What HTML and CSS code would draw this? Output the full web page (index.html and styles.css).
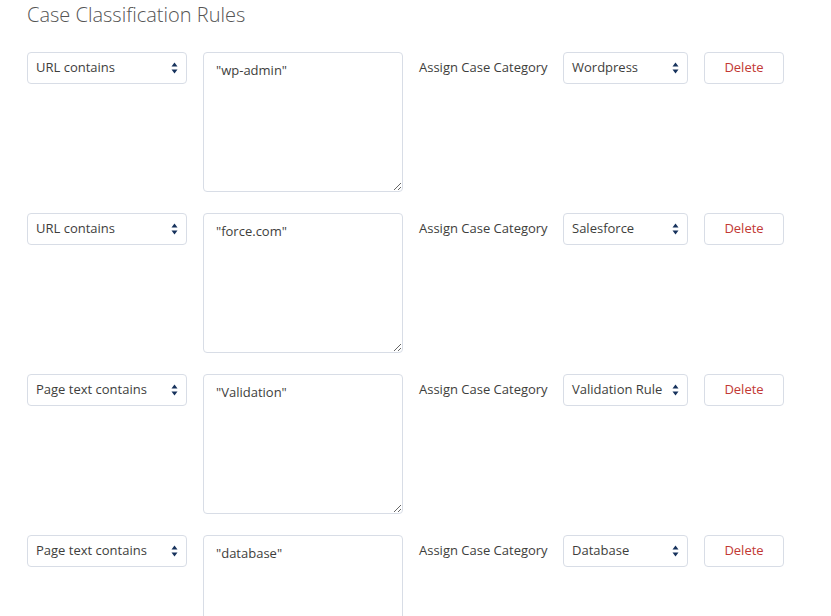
FILE: index.html
```html
<!DOCTYPE html>
<html>
<head>
<meta charset="utf-8">
<link rel="stylesheet" href="styles.css">
</head>
<body>
<div class="page">
  <h1 class="title">Case Classification Rules</h1>

  <div class="rule">
    <div class="select sel-cond"><span>URL contains</span><svg class="arrows" width="7" height="14" viewBox="0 0 7 14"><path d="M3.5 1.5 L6.5 5.5 H0.5 Z M3.5 12.5 L6.5 8.5 H0.5 Z" fill="#16325c"/></svg></div>
    <textarea class="pattern">"wp-admin"</textarea>
    <div class="label">Assign Case Category</div>
    <div class="select sel-cat"><span>Wordpress</span><svg class="arrows" width="7" height="14" viewBox="0 0 7 14"><path d="M3.5 1.5 L6.5 5.5 H0.5 Z M3.5 12.5 L6.5 8.5 H0.5 Z" fill="#16325c"/></svg></div>
    <button class="delete">Delete</button>
  </div>

  <div class="rule">
    <div class="select sel-cond"><span>URL contains</span><svg class="arrows" width="7" height="14" viewBox="0 0 7 14"><path d="M3.5 1.5 L6.5 5.5 H0.5 Z M3.5 12.5 L6.5 8.5 H0.5 Z" fill="#16325c"/></svg></div>
    <textarea class="pattern">"force.com"</textarea>
    <div class="label">Assign Case Category</div>
    <div class="select sel-cat"><span>Salesforce</span><svg class="arrows" width="7" height="14" viewBox="0 0 7 14"><path d="M3.5 1.5 L6.5 5.5 H0.5 Z M3.5 12.5 L6.5 8.5 H0.5 Z" fill="#16325c"/></svg></div>
    <button class="delete">Delete</button>
  </div>

  <div class="rule">
    <div class="select sel-cond"><span>Page text contains</span><svg class="arrows" width="7" height="14" viewBox="0 0 7 14"><path d="M3.5 1.5 L6.5 5.5 H0.5 Z M3.5 12.5 L6.5 8.5 H0.5 Z" fill="#16325c"/></svg></div>
    <textarea class="pattern">"Validation"</textarea>
    <div class="label">Assign Case Category</div>
    <div class="select sel-cat"><span>Validation Rule</span><svg class="arrows" width="7" height="14" viewBox="0 0 7 14"><path d="M3.5 1.5 L6.5 5.5 H0.5 Z M3.5 12.5 L6.5 8.5 H0.5 Z" fill="#16325c"/></svg></div>
    <button class="delete">Delete</button>
  </div>

  <div class="rule">
    <div class="select sel-cond"><span>Page text contains</span><svg class="arrows" width="7" height="14" viewBox="0 0 7 14"><path d="M3.5 1.5 L6.5 5.5 H0.5 Z M3.5 12.5 L6.5 8.5 H0.5 Z" fill="#16325c"/></svg></div>
    <textarea class="pattern">"database"</textarea>
    <div class="label">Assign Case Category</div>
    <div class="select sel-cat"><span>Database</span><svg class="arrows" width="7" height="14" viewBox="0 0 7 14"><path d="M3.5 1.5 L6.5 5.5 H0.5 Z M3.5 12.5 L6.5 8.5 H0.5 Z" fill="#16325c"/></svg></div>
    <button class="delete">Delete</button>
  </div>
</div>
</body>
</html>
```

FILE: styles.css
```css
html, body {
  margin: 0;
  padding: 0;
  background: #ffffff;
}
body {
  font-family: "Open Sans", "Liberation Sans", sans-serif;
  color: #3e3e3c;
  font-size: 13px;
  overflow: hidden;
}
.page {
  padding: 3px 0 0 27px;
}
.title {
  margin: 0 0 25px 0;
  font-size: 20px;
  line-height: 24px;
  font-weight: 300;
  color: #545454;
}
.rule {
  display: flex;
  align-items: flex-start;
  gap: 16px;
  margin-bottom: 21px;
}
.select {
  box-sizing: border-box;
  height: 32px;
  border: 1px solid #d8dde6;
  border-radius: 4px;
  display: flex;
  align-items: center;
  justify-content: space-between;
  padding: 0 8px 2px 8px;
  color: #3e3e3c;
  background: #fff;
  white-space: nowrap;
}
.sel-cond { width: 160px; }
.sel-cat { width: 125px; }
.arrows { flex: none; margin-top: 2px; }
.pattern {
  box-sizing: border-box;
  width: 200px;
  height: 140px;
  margin: 0;
  border: 1px solid #d8dde6;
  border-radius: 4px;
  padding: 8px 12px;
  font-family: "Open Sans", "Liberation Sans", sans-serif;
  font-size: 13px;
  line-height: 18px;
  color: #3e3e3c;
  resize: both;
  outline: none;
}
.label {
  line-height: 30px;
  width: 128px;
  white-space: nowrap;
  color: #3e3e3c;
}
.delete {
  box-sizing: border-box;
  width: 80px;
  height: 32px;
  border: 1px solid #d8dde6;
  border-radius: 4px;
  background: #fff;
  color: #c23934;
  font-family: "Open Sans", "Liberation Sans", sans-serif;
  font-size: 13px;
  padding: 0 0 2px 0;
}
```
